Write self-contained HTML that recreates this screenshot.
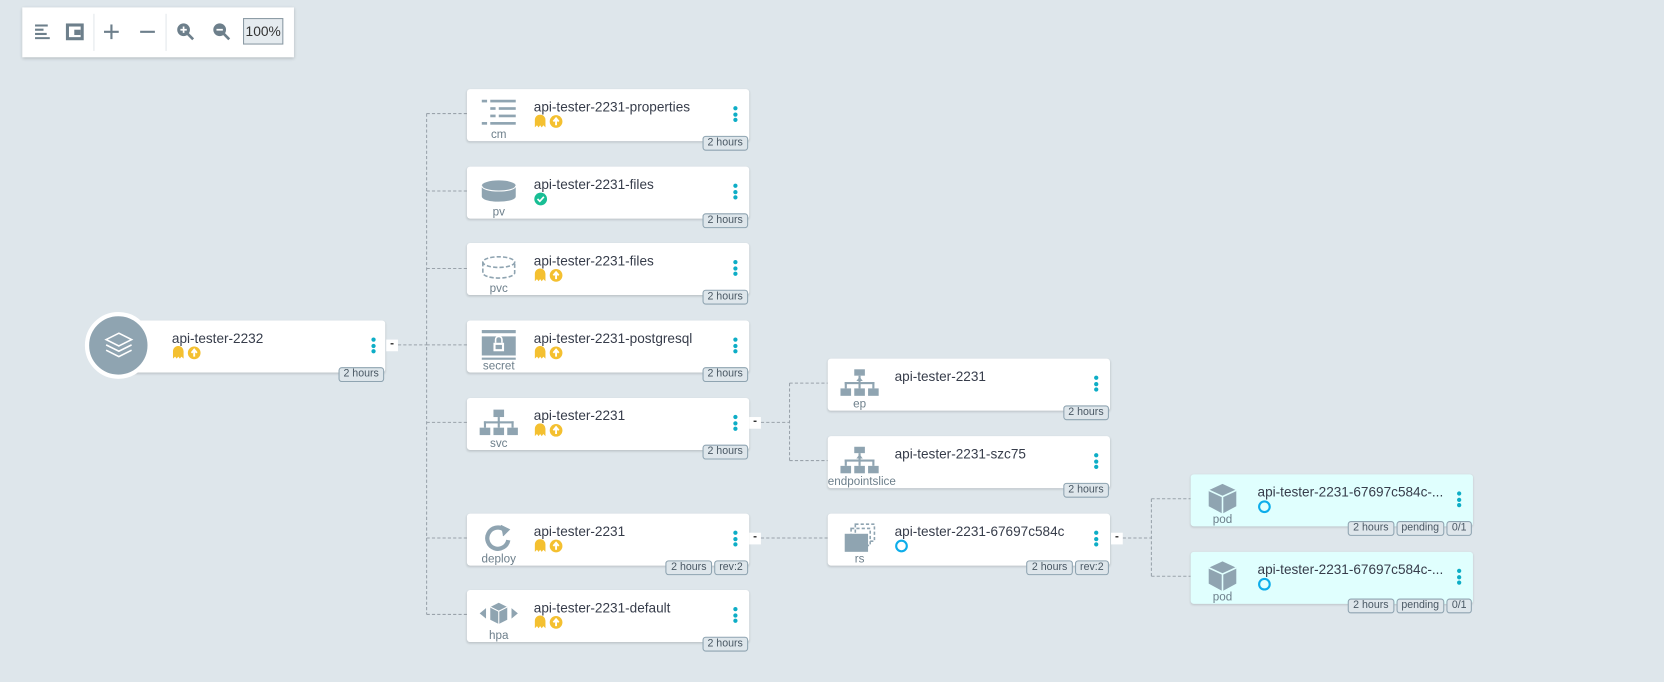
<!DOCTYPE html>
<html><head><meta charset="utf-8"><style>
*{box-sizing:border-box;margin:0;padding:0}
body{width:1664px;height:682px;background:#dee6eb;font-family:"Liberation Sans",sans-serif;position:relative;overflow:hidden}
#w{position:absolute;left:0;top:0;width:1568px;height:643px;transform:scale(1.0612);transform-origin:0 0}
.tb{position:absolute;left:21px;top:7px;width:256px;height:47px;background:#fff;box-shadow:0 1px 3px rgba(0,0,0,.2)}
.tb svg{position:absolute}
.sep{position:absolute;top:6px;width:1px;height:35px;background:#e4e8eb}
.pct{position:absolute;left:208px;top:10px;width:38px;height:25px;border:1px solid #8b9aa4;background:#e5ebef;font-size:13px;color:#333;line-height:23px;text-align:center}
.n{position:absolute;width:266px;height:49px;background:#fff;border-radius:3px;box-shadow:0 1px 2px rgba(0,0,0,.15)}
.n.c{background:#e0fffe}
.ic{position:absolute;left:8px;top:8px;width:44px;height:30px}
.lb{position:absolute;left:0;width:60px;top:37px;text-align:center;font-size:11px;color:#6d7f8b}
.nm{position:absolute;left:63px;top:9px;font-size:12.8px;color:#363c4a;white-space:nowrap}
.st{position:absolute;left:63px;top:24px;height:13px}
.dots{position:absolute;left:251px;top:16px;width:4px}
.dots i{display:block;width:4px;height:4px;border-radius:2px;background:#0dadc6;margin-bottom:1.5px}
.tags{position:absolute;right:1px;top:44px;display:flex;gap:2px}
.tags span{font-size:10px;color:#495763;background:#dee6eb;border:1px solid #8fa4b1;border-radius:3px;height:14px;line-height:12px;padding:0 4px}
.col{position:absolute;width:11px;height:11px;background:#fff;font-size:11px;line-height:9px;text-align:center;color:#333;font-weight:bold}
</style></head><body><div id="w">
<svg width="1568" height="643" style="position:absolute;left:0;top:0" fill="none" stroke="#9aa3ab" stroke-dasharray="3,2">
<path d="M375 325H402M402 107V579M402 107H440M402 180H440M402 253H440M402 325H440M402 398H440M402 507H440M402 579H440"/>
<path d="M717 398H744M744 361V434M744 361H780M744 434H780M717 507H780"/>
<path d="M1058 507H1085M1085 470V543M1085 470H1122M1085 543H1122"/>
</svg>
<div class="tb">
<svg style="left:12px;top:16px" width="14" height="14"><g fill="#6d7f8b"><rect x="0" y="0" width="12" height="2"/><rect x="0" y="4" width="8" height="2"/><rect x="0" y="8" width="11" height="2"/><rect x="0" y="12" width="14" height="2"/></g></svg>
<svg style="left:41px;top:15px" width="17" height="16"><g fill="#6d7f8b"><rect x="0" y="0" width="17" height="16"/></g><rect x="3" y="3" width="11" height="10" fill="#fff"/><rect x="8" y="6" width="6" height="5" fill="#6d7f8b"/></svg>
<div class="sep" style="left:67px"></div>
<svg style="left:77px;top:16px" width="14" height="14"><path d="M7 0V14M0 7H14" stroke="#6d7f8b" stroke-width="2"/></svg>
<svg style="left:111px;top:16px" width="14" height="14"><path d="M0 7H14" stroke="#6d7f8b" stroke-width="2"/></svg>
<div class="sep" style="left:135px"></div>
<svg style="left:145px;top:14px" width="18" height="18"><circle cx="7" cy="7" r="6" fill="#6d7f8b"/><path d="M11 11L16 16" stroke="#6d7f8b" stroke-width="2.5"/><path d="M7 4V10M4 7H10" stroke="#fff" stroke-width="1.6"/></svg>
<svg style="left:179px;top:14px" width="18" height="18"><circle cx="7" cy="7" r="6" fill="#6d7f8b"/><path d="M11 11L16 16" stroke="#6d7f8b" stroke-width="2.5"/><path d="M4 7H10" stroke="#fff" stroke-width="1.6"/></svg>
<div class="pct">100%</div>
</div>

<div class="n" style="left:105px;top:302px;width:258px">
<div class="nm" style="left:57px">api-tester-2232</div>
<div class="st" style="left:57px"><svg width="28" height="13"><path d="M1 12V5a5 5 0 0 1 10 0v7l-2-2-1.5 2-1.5-2-1.5 2-1.5-2z" fill="#f4c030"/><circle cx="21" cy="6.5" r="6" fill="#f4c030"/><path d="M21 10V4M18.5 6.5L21 3.5 23.5 6.5" stroke="#fff" stroke-width="1.8" fill="none"/></svg></div>
<div class="dots" style="left:245px"><i></i><i></i><i></i></div>
<div class="tags"><span>2 hours</span></div>
</div>
<div style="position:absolute;left:80px;top:294px;width:63px;height:63px;border-radius:50%;background:#8fa4b1;border:4px solid #fff"></div>
<svg style="position:absolute;left:96px;top:310px" width="32" height="32" fill="none" stroke="#fff" stroke-width="1.5"><path d="M16 4L28 10 16 16 4 10z"/><path d="M4 15L16 21 28 15"/><path d="M4 20L16 26 28 20"/></svg>
<div class="col" style="left:364px;top:320px">-</div>

<div id="nodes"></div>
</div>
<script>
const S='<svg width="28" height="13"><path d="M1 12V5a5 5 0 0 1 10 0v7l-2-2-1.5 2-1.5-2-1.5 2-1.5-2z" fill="#f4c030"/><circle cx="21" cy="6.5" r="6" fill="#f4c030"/><path d="M21 10V4M18.5 6.5L21 3.5 23.5 6.5" stroke="#fff" stroke-width="1.8" fill="none"/></svg>';
const OK='<svg width="13" height="13"><circle cx="6.5" cy="6.5" r="6" fill="#18be94"/><path d="M3.5 6.5L5.7 8.7 9.5 4.5" stroke="#fff" stroke-width="1.6" fill="none"/></svg>';
const PR='<svg width="13" height="13"><circle cx="6.5" cy="6.5" r="5" stroke="#0dadea" stroke-width="2" fill="none"/></svg>';
const G='#8fa4b1';
const I={
cm:`<svg width="44" height="30" fill="${G}"><rect x="6" y="2" width="5" height="2.5"/><rect x="14" y="2" width="24" height="2.5"/><rect x="14" y="9" width="5" height="2.5"/><rect x="22" y="9" width="16" height="2.5"/><rect x="14" y="16" width="5" height="2.5"/><rect x="22" y="16" width="16" height="2.5"/><rect x="6" y="23" width="5" height="2.5"/><rect x="14" y="23" width="24" height="2.5"/></svg>`,
pv:`<svg width="44" height="30"><path d="M6 10v10c0 3 7 5 16 5s16-2 16-5V10" fill="${G}"/><ellipse cx="22" cy="10" rx="16" ry="5" fill="${G}"/><path d="M6 10c0 3 7 5 16 5s16-2 16-5" stroke="#fff" fill="none"/></svg>`,
pvc:`<svg width="44" height="30" fill="none" stroke="${G}" stroke-width="1.5" stroke-dasharray="4,2"><ellipse cx="22" cy="10" rx="15" ry="5"/><path d="M7 10v10c0 3 7 5 15 5s15-2 15-5V10"/></svg>`,
secret:`<svg width="44" height="30" fill="${G}"><rect x="6" y="1" width="32" height="3"/><rect x="6" y="7" width="32" height="18"/><rect x="6" y="27" width="32" height="2"/><rect x="17" y="13" width="10" height="8" fill="#fff"/><path d="M19 13v-3a3 3 0 0 1 6 0v3" stroke="#fff" stroke-width="1.5" fill="none"/><rect x="19" y="15" width="6" height="4"/></svg>`,
svc:`<svg width="44" height="30" fill="${G}"><rect x="17" y="3" width="10" height="7"/><rect x="21" y="10" width="2" height="5"/><rect x="8" y="14" width="28" height="2"/><rect x="8" y="14" width="2" height="6"/><rect x="21" y="14" width="2" height="6"/><rect x="34" y="14" width="2" height="6"/><rect x="4" y="20" width="10" height="7"/><rect x="17" y="20" width="10" height="7"/><rect x="30" y="20" width="10" height="7"/></svg>`,
ep:`<svg width="44" height="30" fill="${G}"><rect x="17" y="2" width="10" height="6"/><path d="M22 9l-3 4h6z"/><rect x="21" y="8" width="2" height="6"/><rect x="8" y="14" width="28" height="2"/><rect x="8" y="14" width="2" height="6"/><rect x="21" y="14" width="2" height="6"/><rect x="34" y="14" width="2" height="6"/><rect x="4" y="20" width="10" height="7"/><rect x="17" y="20" width="10" height="7"/><rect x="30" y="20" width="10" height="7"/></svg>`,
deploy:`<svg width="44" height="30" fill="none" stroke="${G}" stroke-width="4"><path d="M31 17a10 10 0 1 1-4-10"/><path d="M24 3L32 7 26 13" fill="${G}" stroke-width="1"/></svg>`,
hpa:`<svg width="44" height="30" fill="${G}"><path d="M14 8l8-4 8 4v12l-8 4-8-4z"/><path d="M14 8l8 4 8-4M22 12v12" stroke="#fff" fill="none"/><path d="M4 14l6-5v10z"/><path d="M40 14l-6-5v10z"/></svg>`,
rs:`<svg width="44" height="30"><rect x="18" y="2" width="18" height="16" fill="none" stroke="${G}" stroke-width="1.5" stroke-dasharray="3,2"/><rect x="14" y="6" width="18" height="16" fill="none" stroke="${G}" stroke-width="1.5" stroke-dasharray="3,2"/><rect x="8" y="11" width="22" height="17" fill="${G}"/></svg>`,
pod:`<svg width="44" height="30"><path d="M22 1l13 6v15l-13 7-13-7V7z" fill="${G}"/><path d="M9 7l13 6 13-6M22 13v16" stroke="#e0fffe" stroke-width="1.5" fill="none"/></svg>`
};
const N=[
[440,84,'cm','api-tester-2231-properties',S,['2 hours']],
[440,157,'pv','api-tester-2231-files',OK,['2 hours']],
[440,229,'pvc','api-tester-2231-files',S,['2 hours']],
[440,302,'secret','api-tester-2231-postgresql',S,['2 hours']],
[440,375,'svc','api-tester-2231',S,['2 hours']],
[440,484,'deploy','api-tester-2231',S,['2 hours','rev:2']],
[440,556,'hpa','api-tester-2231-default',S,['2 hours']],
[780,338,'ep','api-tester-2231','',['2 hours']],
[780,411,'ep','api-tester-2231-szc75','',['2 hours'],'endpointslice'],
[780,484,'rs','api-tester-2231-67697c584c',PR,['2 hours','rev:2']],
[1122,447,'pod','api-tester-2231-67697c584c-...',PR,['2 hours','pending','0/1'],0,1],
[1122,520,'pod','api-tester-2231-67697c584c-...',PR,['2 hours','pending','0/1'],0,1]];
let h='';
for(const n of N){h+=`<div class="n${n[7]?' c':''}" style="left:${n[0]}px;top:${n[1]}px"><div class="ic">${I[n[2]]}</div><div class="lb">${n[6]||n[2]}</div><div class="nm">${n[3]}</div><div class="st">${n[4]}</div><div class="dots"><i></i><i></i><i></i></div><div class="tags">${n[5].map(t=>'<span>'+t+'</span>').join('')}</div></div>`;}
h+='<div class="col" style="left:706px;top:393px">-</div><div class="col" style="left:706px;top:502px">-</div><div class="col" style="left:1047px;top:502px">-</div>';
document.getElementById('nodes').innerHTML=h;
</script>
</body></html>
